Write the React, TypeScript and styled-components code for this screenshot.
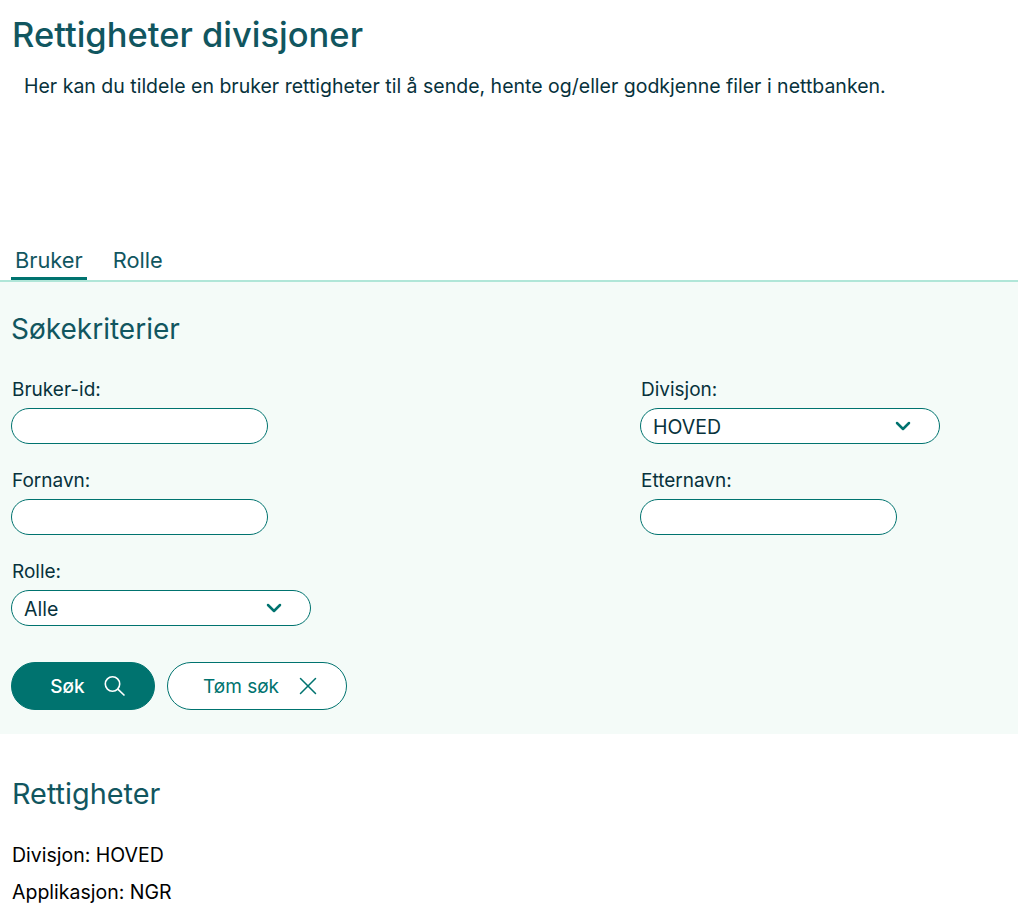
import React from 'react'
import styled, { createGlobalStyle } from 'styled-components'
import { ChevronDown, X } from 'lucide-react'

const GlobalStyle = createGlobalStyle`
  html, body {
    margin: 0;
    padding: 0;
    background: #fff;
    overflow: hidden;
  }
  body {
    font-family: 'Inter', 'Open Sans', sans-serif;
    color: #07323c;
  }
`

const Page = styled.div`
  width: 1018px;
  height: 911px;
  overflow: hidden;
`

const Header = styled.header`
  padding: 14px 12px 0;
  height: 234px;
  box-sizing: border-box;
`

const Title = styled.h1`
  margin: 0;
  font-size: 34.5px;
  line-height: 42px;
  font-weight: 500;
  color: #11565f;
`

const Intro = styled.p`
  margin: 18px 0 0 12px;
  font-size: 19.5px;
  line-height: 24px;
  color: #07323c;
`

const TabBar = styled.div`
  display: flex;
  gap: 22px;
  height: 46px;
  padding-left: 11px;
  border-bottom: 2px solid #b0e6d8;
  box-sizing: content-box;
`

const Tab = styled.div<{ $active?: boolean }>`
  height: 46px;
  padding: 0 4px;
  box-sizing: border-box;
  font-size: 21.8px;
  line-height: 52px;
  color: #11565f;
  border-bottom: 3px solid ${({ $active }) => ($active ? '#00736f' : 'transparent')};
`

const SearchPanel = styled.section`
  background: #f4fbf8;
  height: 452px;
  padding: 28px 11px 0;
  box-sizing: border-box;
`

const SectionTitle = styled.h2`
  margin: 0;
  font-size: 28px;
  line-height: 38px;
  font-weight: 400;
  color: #11565f;
`

const FormGrid = styled.div`
  display: grid;
  grid-template-columns: 629px 1fr;
  row-gap: 25px;
  margin-top: 30px;
`

const Field = styled.label`
  display: flex;
  flex-direction: column;
  gap: 6px;
`

const FieldLabel = styled.span`
  font-size: 19px;
  line-height: 24px;
  padding-left: 1px;
  color: #07323c;
`

const TextInput = styled.input`
  width: 257px;
  height: 36px;
  box-sizing: border-box;
  border: 1px solid #00736f;
  border-radius: 18px;
  background: #fff;
  outline: none;
`

const SelectBox = styled.div`
  display: flex;
  align-items: center;
  justify-content: space-between;
  width: 300px;
  height: 36px;
  box-sizing: border-box;
  padding: 1px 24px 0 12px;
  border: 1px solid #00736f;
  border-radius: 18px;
  background: #fff;
  font-size: 19.5px;
  color: #07323c;
`

const Chevron = styled(ChevronDown)`
  color: #00736f;
  margin-top: -1px;
`

const ButtonRow = styled.div`
  display: flex;
  gap: 12px;
  margin-top: 36px;
`

const Button = styled.button<{ $primary?: boolean }>`
  display: flex;
  align-items: center;
  justify-content: center;
  height: 48px;
  box-sizing: border-box;
  padding: 0 0 0 ${({ $primary }) => ($primary ? '10px' : '12px')};
  border-radius: 24px;
  font-family: inherit;
  font-size: 19px;
  font-weight: ${({ $primary }) => ($primary ? 500 : 400)};
  gap: ${({ $primary }) => ($primary ? '17px' : '14px')};
  width: ${({ $primary }) => ($primary ? '144px' : '180px')};
  border: 1px solid #00736f;
  background: ${({ $primary }) => ($primary ? '#00736f' : '#fff')};
  color: ${({ $primary }) => ($primary ? '#fff' : '#00736f')};
`

const Results = styled.section`
  padding: 39px 12px 0;
`

const ResultsTitle = styled(SectionTitle)`
  font-size: 28.8px;
  line-height: 42px;
`

const ResultLine = styled.div`
  font-size: 19.5px;
  line-height: 37px;
  color: #000;
`

const ResultList = styled.div`
  margin-top: 22px;
`

const SearchIcon = () => (
  <svg width="24" height="24" viewBox="0 0 24 24" fill="none" stroke="currentColor" strokeWidth="1.6">
    <circle cx="10.5" cy="10" r="7.2" />
    <path d="M15.8 15.2 L22.5 21.5" />
  </svg>
)

export default function App() {
  return (
    <Page>
      <GlobalStyle />
      <Header>
        <Title>Rettigheter divisjoner</Title>
        <Intro>Her kan du tildele en bruker rettigheter til å sende, hente og/eller godkjenne filer i nettbanken.</Intro>
      </Header>
      <TabBar>
        <Tab $active>Bruker</Tab>
        <Tab>Rolle</Tab>
      </TabBar>
      <SearchPanel>
        <SectionTitle>Søkekriterier</SectionTitle>
        <FormGrid>
          <Field>
            <FieldLabel>Bruker-id:</FieldLabel>
            <TextInput />
          </Field>
          <Field as="div">
            <FieldLabel>Divisjon:</FieldLabel>
            <SelectBox>
              HOVED
              <Chevron size={24} strokeWidth={2.5} />
            </SelectBox>
          </Field>
          <Field>
            <FieldLabel>Fornavn:</FieldLabel>
            <TextInput />
          </Field>
          <Field>
            <FieldLabel>Etternavn:</FieldLabel>
            <TextInput />
          </Field>
          <Field as="div">
            <FieldLabel>Rolle:</FieldLabel>
            <SelectBox>
              Alle
              <Chevron size={24} strokeWidth={2.5} />
            </SelectBox>
          </Field>
        </FormGrid>
        <ButtonRow>
          <Button $primary>
            Søk
            <SearchIcon />
          </Button>
          <Button>
            Tøm søk
            <X size={30} strokeWidth={1.2} />
          </Button>
        </ButtonRow>
      </SearchPanel>
      <Results>
        <ResultsTitle>Rettigheter</ResultsTitle>
        <ResultList>
          <ResultLine>Divisjon: HOVED</ResultLine>
          <ResultLine>Applikasjon: NGR</ResultLine>
        </ResultList>
      </Results>
    </Page>
  )
}
